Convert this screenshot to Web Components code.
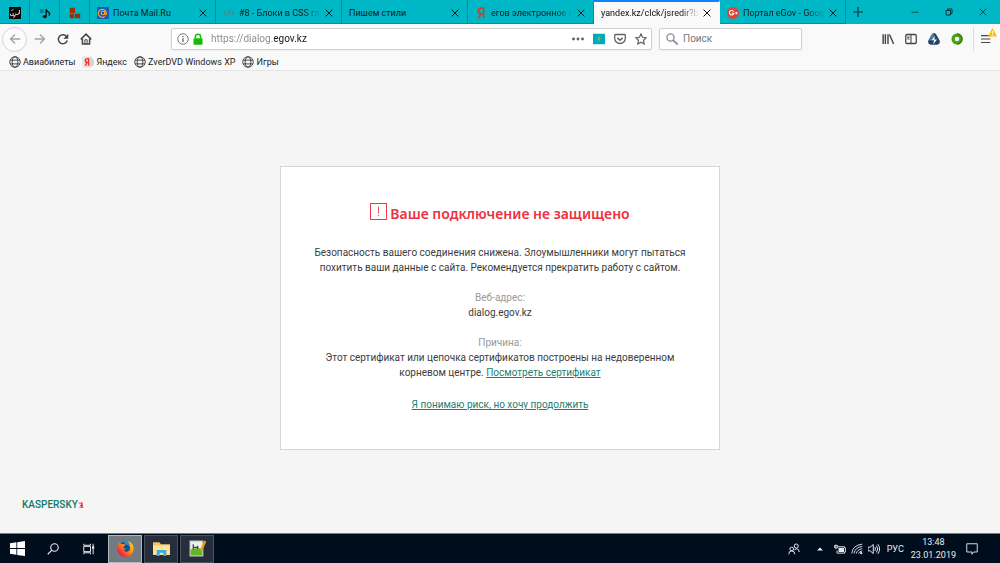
<!DOCTYPE html>
<html lang="ru">
<head>
<meta charset="utf-8">
<title>dialog.egov.kz</title>
<style>
  body { margin: 0; font-family: Roboto, "Open Sans", sans-serif; font-size: 10px; color: #1c1c1c; background: #f5f5f5; }
</style>
</head>
<body>
<desktop-screen></desktop-screen>
<script>
const ICONS = {
  calligraphy: `<rect width="16" height="16" fill="#080808"/><path d="M2 9q-1 3 2 2.500h1.500V8M5.500 11.500H8q1.500 0 1-3M8 12q-.5 2-2.500 2M9.500 10H12q1.500 0 1-2.500M14 4v5M3 5l3-2" fill="none" stroke="#fff" stroke-width="1"/>`,
  note: `<path d="M9.500 3v9M9.500 3q1 3 4 4.500 1.500 2-.5 4" fill="none" stroke="#111" stroke-width="1.800"/><ellipse cx="7.800" cy="12.800" rx="2.800" ry="2.200" fill="#111"/><rect x="1" y="3" width="5" height="5" fill="#067f87"/>`,
  bricks: `<path d="M1 1h7v7H1zM1 9h6v6H1zM8 9h7v6H8z" fill="#963208"/>`,
  mail: `<rect width="16" height="16" rx="1" fill="#1659c8"/><g fill="none" stroke="#f6a623" stroke-width="1.500"><circle cx="8" cy="8" r="2.400"/><path d="M10.400 5.800v3.400q.4 1.600 1.900.8a5.400 5.400 0 1 0-1.800 2.700"/></g>`,
  code: `<path d="M4.500 4.500L1 8l3.500 3.500M11.500 4.500L15 8l-3.500 3.500M9.500 2.500l-3 11" fill="none" stroke="#47898f" stroke-width="1.600"/>`,
  ya: `<path d="M11.500 15V1.500H8.500Q4.500 1.500 4.500 5.200T8.500 9h3M8 9l-3.500 6" fill="none" stroke="#c0452f" stroke-width="2.200"/>`,
  gplus: `<circle cx="8" cy="8" r="8" fill="#db4437"/><path d="M8.800 6A3 3 0 1 0 9.200 8.300H6.500M11 8h3M12.500 6.500v3" fill="none" stroke="#fff" stroke-width="1.400"/>`,
  close: `<path d="M2.500 2.500l11 11M13.500 2.500l-11 11" stroke="currentColor" stroke-width="1.600"/>`,
  plus: `<path d="M8 0v16M0 8h16" stroke="currentColor" stroke-width="1.800"/>`,
  minimize: `<path d="M1 8.500h14" stroke="currentColor" stroke-width="1.600"/>`,
  restore: `<path d="M2 5h9v9H2zM5 5V2h9v9h-3" fill="none" stroke="currentColor" stroke-width="2"/>`,
  thinclose: `<path d="M1.500 1.500l13 13M14.500 1.500l-13 13" stroke="currentColor" stroke-width="1.500"/>`,
  back: `<path d="M15 8H2M8 2L2 8l6 6" fill="none" stroke="currentColor" stroke-width="1.800"/>`,
  forward: `<path d="M1 8h13M8 2l6 6-6 6" fill="none" stroke="currentColor" stroke-width="1.800"/>`,
  reload: `<path d="M13 5.200A6 6 0 1 0 13.600 10" fill="none" stroke="currentColor" stroke-width="2"/><path d="M15 1v6.500H8.500z" fill="currentColor"/>`,
  home: `<path d="M1 8.500L8 1.500l7 7M3.200 8v6.500h9.600V8" fill="none" stroke="currentColor" stroke-width="2"/><path d="M6.500 9h3v5h-3z" fill="none" stroke="currentColor" stroke-width="1.300"/>`,
  info: `<circle cx="8" cy="8" r="7" fill="none" stroke="currentColor" stroke-width="1.200"/><path d="M8 7v5M8 4v1.800" stroke="currentColor" stroke-width="1.800"/>`,
  lock: `<path d="M4.500 7V5q0-3.500 3.500-3.500T11.500 5v2" fill="none" stroke="#12bc00" stroke-width="2"/><rect x="2" y="7" width="12" height="8.500" rx="1" fill="#12bc00"/>`,
  dots: `<g fill="currentColor"><circle cx="2" cy="8" r="1.900"/><circle cx="8" cy="8" r="1.900"/><circle cx="14" cy="8" r="1.900"/></g>`,
  flag: `<rect y="1" width="16" height="14" fill="#00abc2"/><path d="M8 4v7M6.500 6q0 2.500 1.500 2.500T9.500 6" fill="none" stroke="#a5b345" stroke-width="1.200"/>`,
  pocket: `<path d="M2 2h12q1 0 1 1v4.500a7 6.500 0 0 1-14 0V3q0-1 1-1z" fill="none" stroke="currentColor" stroke-width="1.700"/><path d="M4.500 6.500L8 9.800l3.500-3.300" fill="none" stroke="currentColor" stroke-width="1.900"/>`,
  star: `<path d="M8 1.200l2.100 4.500 4.900.6-3.600 3.400.9 4.900L8 12.200l-4.300 2.400.9-4.900L1 6.300l4.900-.6z" fill="none" stroke="currentColor" stroke-width="1.600"/>`,
  search: `<circle cx="6" cy="6" r="4.800" fill="none" stroke="currentColor" stroke-width="1.700"/><path d="M9.500 9.500L15.500 15.500" stroke="currentColor" stroke-width="2.200"/>`,
  library: `<path d="M1.500 1.500v13M4.500 1.500v13M8 1.500v13M10 2l5.500 12.500" stroke="currentColor" stroke-width="1.900"/>`,
  sidebar: `<rect x="1" y="2" width="14" height="12" rx="1.500" fill="none" stroke="currentColor" stroke-width="1.700"/><path d="M8 2v12M3 5.500h3M3 8h3" stroke="currentColor" stroke-width="1.400"/>`,
  prism: `<path d="M8 0q2 0 3 2l4.500 8q1.500 4-3 5.500h-9Q-1 14 .5 10L5 2q1-2 3-2z" fill="#234469"/><path d="M8 0v6L4.500 10H.5L5 2q1-2 3-2z" fill="#54799c"/><path d="M9.500 4L4.500 9.500H8L7 15l5-6.500H8.500z" fill="#f5f8fa"/>`,
  ring: `<circle cx="8" cy="8" r="5.200" fill="#fff" stroke="#4ba311" stroke-width="4.400"/><path d="M8 1.200A6.800 6.800 0 0 1 8 14.800" fill="none" stroke="#287007" stroke-width="1.500"/>`,
  menu: `<path d="M0 2.500h15M0 8h15M0 13.500h15" stroke="currentColor" stroke-width="1.800"/>`,
  warning: `<path d="M8 0L16 15H0z" fill="#ffbf00"/><path d="M8 5v5M8 11.500v2" stroke="#fff" stroke-width="1.700"/>`,
  globe: `<g fill="none" stroke="#3a3a3c" stroke-width="1.200"><circle cx="8" cy="8" r="7"/><ellipse cx="8" cy="8" rx="3.800" ry="7"/><path d="M1.500 5.500h13M1.500 10.500h13"/></g>`,
  yabook: `<path d="M1 1h11l4 5v5l-4 4H1z" fill="#d4d4d4"/><path d="M1 1h10v14H1z" fill="#f2dfdf"/><path d="M8.800 13V3.500H7.200Q4.500 3.500 4.500 6t2.700 2.500h1.600M6.500 8.500L4.500 13" fill="none" stroke="#e33" stroke-width="1.900"/>`,
  alert: `<rect x=".5" y=".5" width="15" height="15" fill="#fff" stroke="currentColor" stroke-width=".9"/><path d="M8 3.500v6.500M8 11.300v1.200" stroke="currentColor" stroke-width=".8"/>`,
  windows: `<path d="M0 2.300l6.800-1v6.200H0zM7.700 1.200L16 0v7.500H7.700zM0 8.400h6.800v6.200L0 13.700zM7.700 8.400H16V16l-8.300-1.200z" fill="#fff"/>`,
  find: `<circle cx="10" cy="6" r="5" fill="none" stroke="currentColor" stroke-width="1.500"/><path d="M6.500 9.500L1 15" stroke="currentColor" stroke-width="1.500"/>`,
  taskview: `<path d="M1 1v2h9V1M1 15v-2h9v2M1 4.500h9v7H1zM13.500 1v14" fill="none" stroke="currentColor" stroke-width="1.300"/><path d="M12 4.500h3v3h-3z" fill="currentColor"/>`,
  firefox: `<defs><linearGradient id="f" x1="1" y1="0" x2="0" y2="1"><stop offset="0" stop-color="#ffe226"/><stop offset=".45" stop-color="#ff8b16"/><stop offset=".8" stop-color="#f5223f"/><stop offset="1" stop-color="#d6127b"/></linearGradient></defs><circle cx="8.200" cy="8.500" r="7" fill="#164d91"/><path d="M2 2.500L4.500 4q2-.7 3.500.5L6 6.500q0 1 1 1.500l2 .2-2.500 1.300q1.200 2 3.500 1.300 3-1.300 2.200-4.300L10.500 4 9 1q5.500 1 6.500 5.500.8 5-3 8-4 2.500-8.500.3Q0 12 .3 7.500.6 4.500 2 2.500z" fill="url(#f)"/><path d="M6 2q2-1.500 4-.8l2.500 3.600-4-.3z" fill="#238fce"/>`,
  folder: `<path d="M0 2h6l1.500 2H16v10H0z" fill="#edc468"/><path d="M0 5h16v9H0z" fill="#ffe19a"/><path d="M3.500 15V9.500h9V15h-2.800v-3H6.300v3z" fill="#36aee5"/>`,
  notepad: `<path d="M1 1h12v14H1z" fill="#eef1e8" stroke="#c4ccc4"/><path d="M1.500 9q5-2 11-1v6.500h-11z" fill="#62b823"/><path d="M4 4v5M4 7h5M8 5.500v3" stroke="#444" stroke-width="1.200"/><path d="M15.300 1l-4 9" stroke="#ef9c16" stroke-width="2.200"/>`,
  people: `<g fill="none" stroke="currentColor" stroke-width="1.300"><circle cx="11" cy="4" r="2.700"/><circle cx="5" cy="8" r="2.400"/><path d="M1 15q0-4.500 4-4.500T9 15M8.500 9q5.500-3.500 6.500 3"/></g>`,
  up: `<path d="M2 11l6-6 6 6z" fill="currentColor"/>`,
  battery: `<path d="M6 6.500h7.500v5.500H6z" fill="currentColor"/><path d="M5.500 5H14v1.500h1.500V12H14v1.500H4V10M2.500 2v5M0.500 3.500h4.500v2Q5 7 2.700 7T.5 5.500z" fill="none" stroke="currentColor" stroke-width="1.200"/>`,
  wifi: `<g fill="none" stroke="currentColor" stroke-width="1.200"><path d="M1 14Q2 3 15 1.500M4 14Q5 6 15 4.500M7 14Q8 9 15 7.500M10 14q1-3 5-3.500"/></g><circle cx="13.500" cy="13.500" r="1.500" fill="currentColor"/>`,
  sound: `<path d="M0 5.500h3L7 2v12L3 10.500H0zM9 5.500q2 2.500 0 5M11.200 3.500q3.500 4.500 0 9M13.200 1.500q4.500 6.500 0 13" fill="none" stroke="currentColor" stroke-width="1.300"/>`,
  notice: `<path d="M1 1h14v11h-5l-2 3v-3H1z" fill="none" stroke="currentColor" stroke-width="1.200"/>`,
  lab: `<path d="M2 2l5-1h6v3h-2v2h2v7h1v2H4v-2h4v-2H5V8h3V4H2z" fill="#e8344a"/>`
};

const define = (name, markup, setup) => {
  const template = document.createElement('template');
  template.innerHTML = markup;
  customElements.define(name, class extends HTMLElement {
    connectedCallback() {
      if (this.shadowRoot) return;
      const root = this.attachShadow({ mode: 'open' });
      root.append(template.content.cloneNode(true));
      if (setup) setup(this, root);
    }
  });
};

const BASE = `*{box-sizing:border-box} button{font:inherit;color:inherit;background:none;border:0;padding:0;margin:0;display:flex;align-items:center;justify-content:center}`;

define('ui-icon', `<style>:host{display:block;flex:none;width:12px;height:12px}svg{display:block;width:100%;height:100%}</style><svg viewBox="0 0 16 16" aria-hidden="true"></svg>`,
  (el, root) => { root.querySelector('svg').innerHTML = ICONS[el.getAttribute('name')]; });

define('browser-tab', `<style>${BASE}
  :host{display:flex;align-items:center;flex:0 1 126px;min-width:0;height:24px;gap:4px;padding:2px 6px 0 7px;border-right:1px solid #078f9a;border-bottom:1px solid #078f9a;box-sizing:border-box;font-size:9px;color:#0a1e20}
  :host([pinned]){flex:0 0 30px;justify-content:center;padding:2px 0 0}
  :host([active]){background:#f9f9fa;border-color:#f9f9fa;border-top:2px solid #0a84ff;padding-top:0;color:#0c0c0d}
  .title{flex:1;min-width:0;overflow:hidden;white-space:nowrap;line-height:14px}
  :host([fade]) .title{mask-image:linear-gradient(to right,#000 calc(100% - 18px),transparent)}
  :host([pinned]) .title,:host([pinned]) button{display:none}
  button{width:12px;height:12px;flex:none;margin-left:-2px}
  button ui-icon{width:10px;height:10px}
</style><slot name="icon"></slot><span class="title"><slot></slot></span><button aria-label="Закрыть вкладку"><ui-icon name="close"></ui-icon></button>`);

define('tab-strip', `<style>${BASE}
  :host{display:flex;background:#00b7c5;height:24px;color:#0c3236}
  .tabs{display:flex;flex:1;min-width:0}
  .new{width:24px;height:24px}
  .new ui-icon{width:10px;height:10px}
  .controls{display:flex}
  .controls button{width:34px;height:24px}
  .controls ui-icon{width:8px;height:8px}
</style>
<div class="tabs">
<browser-tab pinned><ui-icon slot="icon" name="calligraphy"></ui-icon></browser-tab>
<browser-tab pinned><ui-icon slot="icon" name="note"></ui-icon></browser-tab>
<browser-tab pinned><ui-icon slot="icon" name="bricks"></ui-icon></browser-tab>
<browser-tab><ui-icon slot="icon" name="mail"></ui-icon>Почта Mail.Ru</browser-tab>
<browser-tab fade><ui-icon slot="icon" name="code"></ui-icon>#8 - Блоки в CSS главная</browser-tab>
<browser-tab>Пишем стили</browser-tab>
<browser-tab fade><ui-icon slot="icon" name="ya"></ui-icon>егов электронное правит</browser-tab>
<browser-tab active fade>yandex.kz/clck/jsredir?bu=uni</browser-tab>
<browser-tab fade><ui-icon slot="icon" name="gplus"></ui-icon>Портал eGov - Google+</browser-tab>
<button class="new" aria-label="Новая вкладка"><ui-icon name="plus"></ui-icon></button>
</div>
<div class="controls"><button aria-label="Свернуть"><ui-icon name="minimize"></ui-icon></button><button aria-label="Восстановить"><ui-icon name="restore"></ui-icon></button><button aria-label="Закрыть"><ui-icon name="thinclose"></ui-icon></button></div>`);

define('nav-bar', `<style>${BASE}
  :host{display:flex;align-items:center;height:30px;padding:0 3px 0 2px;background:#f9f9fa;color:#45454a;box-sizing:border-box}
  .nav{display:flex;align-items:center;flex:none}
  .nav button{width:23px;height:24px}
  .nav .back{width:25px;height:25px;margin-right:1px;border:1px solid #d5d5d7;border-radius:50%;background:#fcfcfc}
  .nav .dim{color:#a2a2a5}
  .field{display:flex;align-items:center;height:22px;min-width:0;background:#fff;border:1px solid #cfcfd1;border-radius:2px;box-shadow:0 1px 2px #0000000d}
  .url{flex:1;margin-left:74px;padding:0 4px 0 5px;gap:3px;color:#6c6c70}
  .search{flex:0 0 143px;margin-left:7px;padding:0 6px;gap:5px;color:#8a8a8d}
  input{flex:1;width:100%;min-width:0;border:0;outline:0;padding:0;margin:0;font:inherit;font-size:10px;line-height:18px;height:18px;background:none;color:#222}
  .url input{margin-left:4px;background:linear-gradient(to right,#88888c 63px,#151515 63px);background-clip:text;-webkit-background-clip:text;-webkit-text-fill-color:transparent}
  input::placeholder{color:#77777b;opacity:1}
  .actions{display:flex;align-items:center;gap:9px;color:#606065}
  .tools{display:flex;flex:none;align-items:center;margin-left:74px}
  .tools button{width:23px;height:24px}
  .tools .menu{position:relative;border-left:1px solid #ddd;margin-left:5px;width:24px}
  .menu ui-icon{width:10px;height:10px}
  .menu .badge{position:absolute;right:0;top:1px;width:9px;height:9px}
</style>
<div class="nav"><button class="back dim" aria-label="Назад"><ui-icon name="back"></ui-icon></button><button class="dim" aria-label="Вперёд"><ui-icon name="forward"></ui-icon></button><button aria-label="Обновить"><ui-icon name="reload"></ui-icon></button><button aria-label="Домой"><ui-icon name="home"></ui-icon></button></div>
<div class="field url"><ui-icon name="info"></ui-icon><ui-icon name="lock"></ui-icon><input type="text" aria-label="Адрес" value="https://dialog.egov.kz"><div class="actions"><button aria-label="Действия"><ui-icon name="dots"></ui-icon></button><button aria-label="Казахстан"><ui-icon name="flag"></ui-icon></button><button aria-label="Pocket"><ui-icon name="pocket"></ui-icon></button><button aria-label="В закладки"><ui-icon name="star"></ui-icon></button></div></div>
<div class="field search"><ui-icon name="search"></ui-icon><input type="text" aria-label="Поиск" placeholder="Поиск"></div>
<div class="tools"><button aria-label="Библиотека"><ui-icon name="library"></ui-icon></button><button aria-label="Боковая панель"><ui-icon name="sidebar"></ui-icon></button><button aria-label="Расширение"><ui-icon name="prism"></ui-icon></button><button aria-label="Защита"><ui-icon name="ring"></ui-icon></button><button class="menu" aria-label="Меню"><ui-icon name="menu"></ui-icon><ui-icon class="badge" name="warning"></ui-icon></button></div>`);

define('bookmark-link', `<style>a{display:flex;align-items:center;gap:2px;color:#1c1c1c;text-decoration:none;font-size:9px;line-height:14px;white-space:nowrap}</style><a href="#"><slot name="icon"></slot><slot></slot></a>`);

define('bookmarks-bar', `<style>:host{display:flex;align-items:center;gap:7px;height:17px;padding:0 9px;background:#f9f9fa;border-bottom:1px solid #e4e4e5;box-sizing:border-box}</style>
<bookmark-link><ui-icon slot="icon" name="globe"></ui-icon>Авиабилеты</bookmark-link>
<bookmark-link><ui-icon slot="icon" name="yabook"></ui-icon>Яндекс</bookmark-link>
<bookmark-link><ui-icon slot="icon" name="globe"></ui-icon>ZverDVD Windows XP</bookmark-link>
<bookmark-link><ui-icon slot="icon" name="globe"></ui-icon>Игры</bookmark-link>`);

define('warning-page', `<style>${BASE}
  :host{flex:1;display:flex;flex-direction:column;background:#f5f5f5;color:#3c3c3c;font-size:10px;line-height:15px}
  .card{width:44%;min-width:420px;margin:95px auto 0;padding:36px 32px 35px;background:#fff;border:1px solid #d5d5d5;text-align:center}
  h1{display:flex;justify-content:center;align-items:center;gap:3px;margin:0 0 20px;font-family:"Noto Sans",sans-serif;font-size:14px;line-height:22px;font-weight:600;color:#ee303f}
  h1 ui-icon{width:17px;height:17px;margin-bottom:5px}
  p{margin:0 0 15px}
  .label{display:block;color:#999}
  a{color:#1c8071}
  .go{margin:0;padding:2px 0}
  footer{display:flex;align-items:center;margin-top:auto;padding:0 22px 20px;color:#147a67;font-size:10px;line-height:16px;font-weight:500}
  footer ui-icon{width:6px;height:10px}
</style>
<main class="card">
<h1><ui-icon name="alert"></ui-icon>Ваше подключение не защищено</h1>
<p>Безопасность вашего соединения снижена. Злоумышленники могут пытаться похитить ваши данные с сайта. Рекомендуется прекратить работу с сайтом.</p>
<p><span class="label">Веб-адрес:</span>dialog.egov.kz</p>
<p><span class="label">Причина:</span><span>Этот сертификат или цепочка сертификатов построены на недоверенном</span> <span>корневом центре.</span> <a href="#">Посмотреть сертификат</a></p>
<p class="go"><a href="#">Я понимаю риск, но хочу продолжить</a></p>
</main>
<footer>KASPERSKY<ui-icon name="lab"></ui-icon></footer>`);

define('task-bar', `<style>${BASE}
  :host{display:flex;align-items:center;height:30px;background:#000d1d;border-top:1px solid #777d84;color:#e9edf0;font-size:9px;padding-right:22px;box-sizing:border-box}
  .apps,.tray{display:flex;align-items:center}
  .apps{flex:1}
  .apps button{width:36px;height:29px}
  .apps .win{width:35px}
  .win ui-icon{width:15px;height:15px}
  .apps .app{width:34px;height:28px;margin-right:2px;background:#262e3b;border:1px solid #4b515c}
  .apps .current{margin-left:1px;background:#737a82;border-color:#b2b6bb}
  .app ui-icon{width:17px;height:17px}
  .tray{gap:5px}
  .people{margin-right:11px}
  .small,.small ui-icon{width:8px;height:8px}
  .small{margin-right:5px}
  .lang{margin-left:2px}
  .clock{display:flex;flex-direction:column;align-items:center;line-height:13px;margin:0 5px 0 2px}
</style>
<div class="apps"><button class="win" aria-label="Пуск"><ui-icon name="windows"></ui-icon></button><button aria-label="Найти"><ui-icon name="find"></ui-icon></button><button aria-label="Представление задач"><ui-icon name="taskview"></ui-icon></button><button class="app current" aria-label="Firefox"><ui-icon name="firefox"></ui-icon></button><button class="app" aria-label="Проводник"><ui-icon name="folder"></ui-icon></button><button class="app" aria-label="Notepad++"><ui-icon name="notepad"></ui-icon></button></div>
<div class="tray"><button class="people" aria-label="Люди"><ui-icon name="people"></ui-icon></button><button class="small" aria-label="Скрытые значки"><ui-icon name="up"></ui-icon></button><button aria-label="Батарея"><ui-icon name="battery"></ui-icon></button><button aria-label="Сеть"><ui-icon name="wifi"></ui-icon></button><button aria-label="Громкость"><ui-icon name="sound"></ui-icon></button><button class="lang">РУС</button><button class="clock"><span>13:48</span><span>23.01.2019</span></button><button aria-label="Уведомления"><ui-icon name="notice"></ui-icon></button></div>`);

define('desktop-screen', `<style>:host{display:flex;flex-direction:column;min-height:100vh}</style><tab-strip></tab-strip><nav-bar></nav-bar><bookmarks-bar></bookmarks-bar><warning-page></warning-page><task-bar></task-bar>`);
</script>
</body>
</html>
